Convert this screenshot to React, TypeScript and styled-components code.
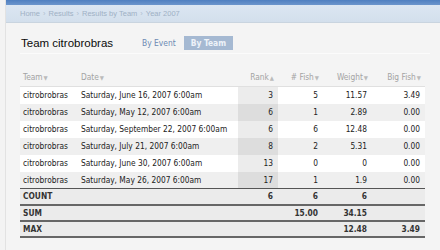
import React from "react";
import styled, { createGlobalStyle } from "styled-components";

interface Result {
  team: string;
  date: string;
  rank: number;
  fish: number;
  weight: string;
  bigFish: string;
}

const results: Result[] = [
  { team: "citrobrobras", date: "Saturday, June 16, 2007 6:00am", rank: 3, fish: 5, weight: "11.57", bigFish: "3.49" },
  { team: "citrobrobras", date: "Saturday, May 12, 2007 6:00am", rank: 6, fish: 1, weight: "2.89", bigFish: "0.00" },
  { team: "citrobrobras", date: "Saturday, September 22, 2007 6:00am", rank: 6, fish: 6, weight: "12.48", bigFish: "0.00" },
  { team: "citrobrobras", date: "Saturday, July 21, 2007 6:00am", rank: 8, fish: 2, weight: "5.31", bigFish: "0.00" },
  { team: "citrobrobras", date: "Saturday, June 30, 2007 6:00am", rank: 13, fish: 0, weight: "0", bigFish: "0.00" },
  { team: "citrobrobras", date: "Saturday, May 26, 2007 6:00am", rank: 17, fish: 1, weight: "1.9", bigFish: "0.00" },
];

const summary = [
  { label: "COUNT", rank: "6", fish: "6", weight: "6", bigFish: "" },
  { label: "SUM", rank: "", fish: "15.00", weight: "34.15", bigFish: "" },
  { label: "MAX", rank: "", fish: "", weight: "12.48", bigFish: "3.49" },
];

const GlobalStyle = createGlobalStyle`
  html, body {
    margin: 0;
    padding: 0;
    background: #f3f3f3;
    font-family: "DejaVu Sans Condensed", "DejaVu Sans", Verdana, sans-serif;
    font-stretch: condensed;
  }
`;

export default function App() {
  return (
    <Page>
      <GlobalStyle />
      <Frame>
        <TopBar />
        <Crumbs>
          <CrumbLink>Home</CrumbLink>
          <Sep>›</Sep>
          <CrumbLink>Results</CrumbLink>
          <Sep>›</Sep>
          <CrumbLink>Results by Team</CrumbLink>
          <Sep>›</Sep>
          <CrumbLink>Year 2007</CrumbLink>
        </Crumbs>
        <Content>
          <TitleRow>
            <Title>Team citrobrobras</Title>
            <Tab>By Event</Tab>
            <Tab active>By Team</Tab>
          </TitleRow>
          <Table>
            <colgroup>
              <col style={{ width: 58 }} />
              <col style={{ width: 160 }} />
              <col style={{ width: 40 }} />
              <col style={{ width: 45 }} />
              <col style={{ width: 49 }} />
              <col style={{ width: 53 }} />
            </colgroup>
            <thead>
              <tr>
                <Th>Team<Arrow>▼</Arrow></Th>
                <Th>Date<Arrow>▼</Arrow></Th>
                <Th right>Rank<Arrow>▲</Arrow></Th>
                <Th right># Fish<Arrow>▼</Arrow></Th>
                <Th right>Weight<Arrow>▼</Arrow></Th>
                <Th right>Big Fish<Arrow>▼</Arrow></Th>
              </tr>
            </thead>
            <tbody>
              {results.map((r, i) => (
                <Row key={i} odd={i % 2 === 1}>
                  <Td>{r.team}</Td>
                  <Td>{r.date}</Td>
                  <Td right sorted>{r.rank}</Td>
                  <Td right>{r.fish}</Td>
                  <Td right>{r.weight}</Td>
                  <Td right>{r.bigFish}</Td>
                </Row>
              ))}
            </tbody>
            <tfoot>
              {summary.map((s, i) => (
                <SumRow key={s.label} first={i === 0}>
                  <SumCell colSpan={2}>{s.label}</SumCell>
                  <SumCell right>{s.rank}</SumCell>
                  <SumCell right>{s.fish}</SumCell>
                  <SumCell right>{s.weight}</SumCell>
                  <SumCell right>{s.bigFish}</SumCell>
                </SumRow>
              ))}
            </tfoot>
          </Table>
        </Content>
      </Frame>
    </Page>
  );
}

const Page = styled.div`
  width: 440px;
  height: 250px;
  overflow: hidden;
  background: #f3f3f3;
`;

const Frame = styled.div`
  margin-left: 5px;
  border-left: 1px solid #e2e2e2;
  background: #f4f4f4;
  min-height: 250px;
`;

const TopBar = styled.div`
  height: 5px;
  background: linear-gradient(#4f7fc0, #6b95cc);
`;

const Crumbs = styled.div`
  height: 17px;
  display: flex;
  align-items: center;
  gap: 3px;
  padding-left: 14px;
  background: linear-gradient(#dbe6f2, #d3dfec);
  border-bottom: 1px solid #c9d4df;
  font-family: "Liberation Sans", Arial, sans-serif;
  font-stretch: normal;
  font-size: 7.5px;
`;

const CrumbLink = styled.span`
  color: #9fb1c5;
`;

const Sep = styled.span`
  color: #b0bfcf;
`;

const Content = styled.div`
  padding: 0 10px 0 14px;
`;

const TitleRow = styled.div`
  display: flex;
  align-items: center;
  height: 20px;
  padding-top: 10px;
  margin-bottom: 8px;
  border-bottom: 1px solid #fbfbfb;
`;

const Title = styled.h1`
  margin: 0 29px 0 1px;
  font-family: "Liberation Sans", Arial, sans-serif;
  font-stretch: normal;
  font-size: 11.5px;
  font-weight: normal;
  color: #0a0a0a;
`;

const Tab = styled.span<{ active?: boolean }>`
  display: flex;
  align-items: center;
  justify-content: center;
  height: 14px;
  font-family: "DejaVu Sans Condensed", "DejaVu Sans", sans-serif;
  font-size: 8.4px;
  margin-right: 8px;
  padding: 0 ${(p) => (p.active ? 7 : 0)}px;
  color: ${(p) => (p.active ? "#eef3f9" : "#6d8ab3")};
  background: ${(p) => (p.active ? "#a5b9d2" : "transparent")};
  font-weight: ${(p) => (p.active ? "bold" : "normal")};
`;

const Table = styled.table`
  width: 405px;
  table-layout: fixed;
  border-collapse: collapse;
  font-size: 8.3px;
  color: #222;
`;

const Th = styled.th<{ right?: boolean }>`
  height: 20px;
  padding: 0 4px 4px 3px;
  vertical-align: bottom;
  text-align: ${(p) => (p.right ? "right" : "left")};
  font-weight: normal;
  color: #a3a3a3;
  border-bottom: 1px solid #e0e0e0;
  white-space: nowrap;
`;

const Arrow = styled.span`
  font-size: 6px;
  margin-left: 1px;
  color: #bbb;
`;

const Row = styled.tr<{ odd: boolean }>`
  height: 17px;
  background: ${(p) => (p.odd ? "#efefef" : "#ffffff")};
`;

const Td = styled.td<{ right?: boolean; sorted?: boolean }>`
  padding: 0 5px 0 3px;
  text-align: ${(p) => (p.right ? "right" : "left")};
  white-space: nowrap;
  overflow: hidden;
  ${(p) => (p.sorted ? "background: rgba(0, 0, 0, 0.075);" : "")}
`;

const SumRow = styled.tr<{ first?: boolean }>`
  height: 16px;
  background: #ebebeb;
  border-top: ${(p) => (p.first ? "1px solid #555" : "none")};
  border-bottom: 2px solid #666;
`;

const SumCell = styled.td<{ right?: boolean }>`
  padding: 0 5px 0 3px;
  text-align: ${(p) => (p.right ? "right" : "left")};
  font-weight: bold;
  color: #333;
`;
